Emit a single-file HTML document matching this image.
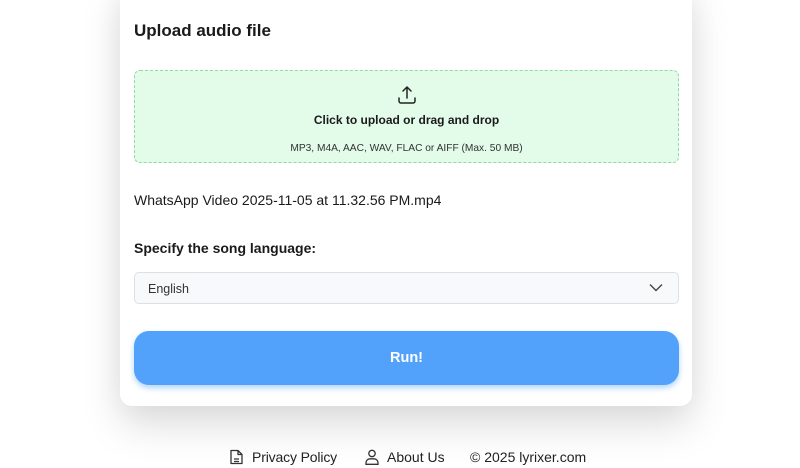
<!DOCTYPE html>
<html><head><meta charset="utf-8"><style>
*{box-sizing:border-box;margin:0;padding:0}
body{width:800px;height:468px;background:#fff;font-family:"Liberation Sans",Arial,sans-serif;color:#1a1a1a;position:relative;overflow:hidden}
.card{position:absolute;left:120px;top:-20px;width:572px;height:426px;background:#fff;border-radius:12px;box-shadow:0 20px 40px rgba(0,0,0,0.13),0 0 30px rgba(0,0,0,0.05)}
h1{position:absolute;left:134px;top:21px;font-size:17px;font-weight:bold;color:#1a1a1a}
.drop{position:absolute;left:134px;top:70px;width:545px;height:93px;background:#e3fbe9;border:1px dashed #8fd9a3;border-radius:6px;text-align:center}
.drop svg{position:absolute;left:262px;top:14px}
.drop .t{position:absolute;left:0;right:0;top:42px;font-size:12px;font-weight:bold}
.drop .s{position:absolute;left:0;right:0;top:72px;font-size:10.2px;color:#333}
.file{position:absolute;left:134px;top:192px;font-size:14px}
.lab{position:absolute;left:134px;top:240px;font-size:14px;font-weight:bold}
.sel{position:absolute;left:134px;top:272px;width:545px;height:32px;background:#f8f9fb;border:1px solid #dde0e4;border-radius:5px;font-size:12.5px;color:#333;padding:9px 0 0 13px}
.sel svg{position:absolute;right:15px;top:10px}
.btn{position:absolute;left:134px;top:331px;width:545px;height:54px;background:#52a2fc;border-radius:15px;box-shadow:0 3px 6px rgba(82,162,252,0.45);color:#fff;font-weight:bold;font-size:14.5px;text-align:center;line-height:54px}
.foot{position:absolute;top:449px;font-size:14px;color:#222}
</style></head><body>
<div class="card"></div>
<h1>Upload audio file</h1>
<div class="drop">
<svg width="20" height="20" viewBox="0 0 20 20" fill="none" stroke="#222" stroke-width="1.5" stroke-linecap="round" stroke-linejoin="round"><path d="M10 13V2M6 6l4-4 4 4M2 13v3a2 2 0 0 0 2 2h12a2 2 0 0 0 2-2v-3"/></svg>
<div class="t">Click to upload or drag and drop</div>
<div class="s">MP3, M4A, AAC, WAV, FLAC or AIFF (Max. 50 MB)</div>
</div>
<div class="file">WhatsApp Video 2025-11-05 at 11.32.56 PM.mp4</div>
<div class="lab">Specify the song language:</div>
<div class="sel">English<svg width="14" height="9" viewBox="0 0 14 9" fill="none" stroke="#444" stroke-width="1.4"><path d="M1 1.5l6 6 6-6"/></svg></div>
<div class="btn">Run!</div>
<svg style="position:absolute;left:230px;top:449px" width="13" height="16" viewBox="0 0 13 16" fill="none" stroke="#333" stroke-width="1.3" stroke-linejoin="round"><path d="M1 1.5h7l4 4v9H1z M8 1.5v4h4 M4 10h5 M4 12.5h5"/></svg>
<div class="foot" style="left:252px;letter-spacing:-0.15px">Privacy Policy</div>
<svg style="position:absolute;left:365px;top:449px" width="14" height="16" viewBox="0 0 14 16" fill="none" stroke="#333" stroke-width="1.3"><circle cx="7" cy="4.5" r="3.2"/><path d="M1 15.3v-1.5a4 4 0 0 1 4-4h4a4 4 0 0 1 4 4v1.5z"/></svg>
<div class="foot" style="left:387px">About Us</div>
<div class="foot" style="left:470px">© 2025 lyrixer.com</div>
</body></html>
